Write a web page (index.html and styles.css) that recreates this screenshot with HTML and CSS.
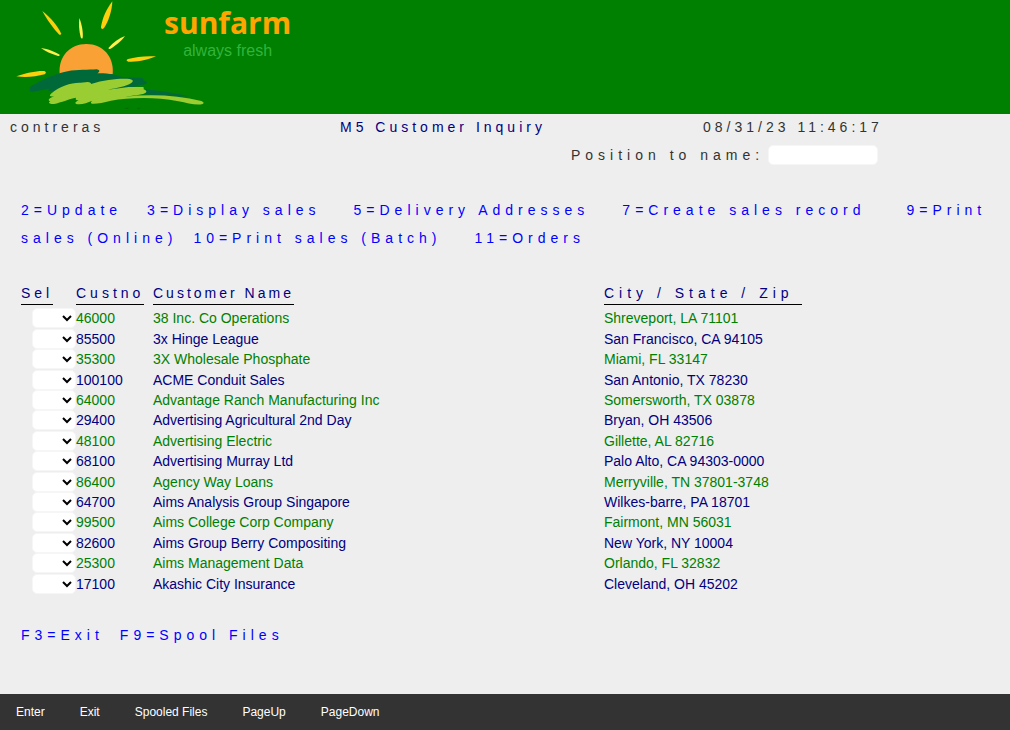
FILE: index.html
```
<!DOCTYPE html>
<html lang="en">
<head>
<meta charset="utf-8">
<title>M5 Customer Inquiry</title>
<link rel="stylesheet" href="styles.css">
</head>
<body>
<header class="banner">
  <svg class="logo" viewBox="0 0 492 342" aria-hidden="true">
    <path fill="#f9a134" d="M179 223C174 170 209 132 259 132S343 170 338 223Z"/>
    <g fill="#ffcf0d">
      <path d="M127 33C151 52 175 80 183 100Q184 106 178 104C160 86 141 59 127 33Z"/>
      <path d="M337 4C336 32 326 64 312 84Q304 91 303 81C307 55 319 28 337 4Z"/>
      <path d="M468 169C447 179 412 187 385 185Q375 181 384 177C407 170 439 167 468 169Z"/>
      <path d="M49 229C77 219 109 212 133 213Q142 217 134 223C108 230 76 233 49 229Z"/>
    </g>
    <g fill="#fff04f">
      <path d="M238 54C246 74 250 99 248 114Q245 118 242 112C237 92 236 72 238 54Z"/>
      <path d="M123 144C144 147 167 156 179 164Q180 169 174 168C154 162 135 154 123 144Z"/>
      <path d="M375 108C363 124 345 139 330 147Q324 148 326 143C339 128 357 115 375 108Z"/>
    </g>
    <path fill="#00693a" d="M107 251C133 236 166 222 203 214C232 208 266 210 290 208Q301 210 297 216L292 220C323 219 350 224 368 232L419 233Q437 235 429 241Q446 245 438 252L420 256L396 262L435 268C477 272 526 279 568 289L535 290L430 283L150 274Q137 269 156 265L94 276Q86 271 91 266Q84 260 107 251Z"/>
    <path fill="#9acd32" d="M153 281C181 257 214 247 242 248L263 246Q274 248 273 252C315 239 358 235 389 237Q405 240 394 249C378 259 350 264 323 269L386 261L427 261Q435 263 430 267Q444 273 437 278C424 286 397 286 376 290C455 282 535 286 604 303Q617 309 606 313C584 316 562 309 535 304C463 289 385 293 333 302C309 308 290 312 276 311Q269 308 277 302C261 309 244 315 229 312Q220 309 236 301Q224 301 228 293C198 299 174 312 155 312Q141 309 151 304Q141 301 151 294L162 289Q143 291 153 281Z"/>
    <path stroke="#05640b" stroke-width="2" d="M376 325H385M412 325H420"/>
  </svg>
  <div class="brand">
    <div class="brand-name">sunfarm</div>
    <div class="brand-tag">always fresh</div>
  </div>
</header>
<main class="screen">
  <div class="topline spaced">
    <span>contreras</span>
    <h1 class="title">M5 Customer Inquiry</h1>
    <span>08/31/23 11:46:17</span>
  </div>
  <div class="position spaced wide">
    <label for="name">Position to name:</label>
    <input class="name-box" id="name" type="text">
  </div>
  <p class="keys spaced wide"><span class="g3">2=Update</span><wbr><span class="g4">3=Display sales</span><wbr><span class="g4">5=Delivery Addresses</span><wbr><span class="g5">7=Create sales record</span><wbr><span>9=Print</span> <span class="g2">sales (Online)</span><wbr><span class="g4">10=Print sales (Batch)</span><wbr><span>11=Orders</span></p>
  <table class="list">
    <colgroup><col class="c-sel"><col class="c-no"><col class="c-name"><col></colgroup>
    <thead class="spaced">
      <tr><th><span class="head">Sel</span></th><th><span class="head">Custno</span></th><th><span class="head tight">Customer Name</span></th><th><span class="head head-city wide">City / State / Zip</span></th></tr>
    </thead>
    <tbody>
      <tr><td><select class="sel" aria-label="Option for 46000"><option></option></select></td><td>46000</td><td>38 Inc. Co Operations</td><td>Shreveport, LA 71101</td></tr>
      <tr><td><select class="sel" aria-label="Option for 85500"><option></option></select></td><td>85500</td><td>3x Hinge League</td><td>San Francisco, CA 94105</td></tr>
      <tr><td><select class="sel" aria-label="Option for 35300"><option></option></select></td><td>35300</td><td>3X Wholesale Phosphate</td><td>Miami, FL 33147</td></tr>
      <tr><td><select class="sel" aria-label="Option for 100100"><option></option></select></td><td>100100</td><td>ACME Conduit Sales</td><td>San Antonio, TX 78230</td></tr>
      <tr><td><select class="sel" aria-label="Option for 64000"><option></option></select></td><td>64000</td><td>Advantage Ranch Manufacturing Inc</td><td>Somersworth, TX 03878</td></tr>
      <tr><td><select class="sel" aria-label="Option for 29400"><option></option></select></td><td>29400</td><td>Advertising Agricultural 2nd Day</td><td>Bryan, OH 43506</td></tr>
      <tr><td><select class="sel" aria-label="Option for 48100"><option></option></select></td><td>48100</td><td>Advertising Electric</td><td>Gillette, AL 82716</td></tr>
      <tr><td><select class="sel" aria-label="Option for 68100"><option></option></select></td><td>68100</td><td>Advertising Murray Ltd</td><td>Palo Alto, CA 94303-0000</td></tr>
      <tr><td><select class="sel" aria-label="Option for 86400"><option></option></select></td><td>86400</td><td>Agency Way Loans</td><td>Merryville, TN 37801-3748</td></tr>
      <tr><td><select class="sel" aria-label="Option for 64700"><option></option></select></td><td>64700</td><td>Aims Analysis Group Singapore</td><td>Wilkes-barre, PA 18701</td></tr>
      <tr><td><select class="sel" aria-label="Option for 99500"><option></option></select></td><td>99500</td><td>Aims College Corp Company</td><td>Fairmont, MN 56031</td></tr>
      <tr><td><select class="sel" aria-label="Option for 82600"><option></option></select></td><td>82600</td><td>Aims Group Berry Compositing</td><td>New York, NY 10004</td></tr>
      <tr><td><select class="sel" aria-label="Option for 25300"><option></option></select></td><td>25300</td><td>Aims Management Data</td><td>Orlando, FL 32832</td></tr>
      <tr><td><select class="sel" aria-label="Option for 17100"><option></option></select></td><td>17100</td><td>Akashic City Insurance</td><td>Cleveland, OH 45202</td></tr>
    </tbody>
  </table>
  <p class="keys keys-last spaced"><span class="g2">F3=Exit</span><span>F9=Spool Files</span></p>
</main>
<footer class="actions">
  <button type="button">Enter</button>
  <button type="button">Exit</button>
  <button type="button">Spooled Files</button>
  <button type="button">PageUp</button>
  <button type="button">PageDown</button>
</footer>
</body>
</html>
```
FILE: styles.css
```
* { box-sizing: border-box; }
body {
  margin: 0;
  min-height: 100vh;
  display: flex;
  flex-direction: column;
  background: #eee;
  color: #333;
  font: 14px/28px "Liberation Sans", Arial, sans-serif;
}
.banner { display: flex; background: green; }
.logo { width: 164px; height: 114px; overflow: visible; }
.brand { display: flex; flex-direction: column; align-items: center; padding-top: 4px; }
.brand-name { color: orange; font: bold 30px/38px "Open Sans", "Noto Sans", sans-serif; }
.brand-tag { color: #32b43c; font-size: 16px; line-height: 18px; }
.screen { flex: 1; }
.spaced { letter-spacing: 4px; }
.wide, .keys { letter-spacing: 5px; }
.tight { letter-spacing: 3px; }
.topline { display: grid; grid-template-columns: 330fr 363fr 307fr; padding-left: 10px; line-height: 27px; }
.title { margin: 0; color: navy; font-size: 14px; font-weight: normal; }
.position { display: flex; align-items: center; gap: 4px; padding-left: 571px; }
.name-box { width: 110px; height: 20px; padding: 0 4px; border: 1px solid #f6f6f6; border-radius: 5px; background: #fff; font: inherit; }
.keys { margin: 27px 16px 30px 21px; color: blue; }
.g2 { margin-right: 16px; }
.g3 { margin-right: 25px; }
.g4 { margin-right: 33px; }
.g5 { margin-right: 41px; }
.list { width: 100%; table-layout: fixed; border-collapse: collapse; line-height: 20px; }
.c-sel { width: 76px; }
.c-no { width: 77px; }
.c-name { width: 451px; }
.list th, .list td { padding: 0; text-align: left; font-weight: normal; white-space: nowrap; }
.list th { color: navy; padding-bottom: 3px; }
.list th:first-child { padding-left: 21px; }
.list td:first-child { padding-left: 32px; }
.head { display: inline-block; line-height: 22px; border-bottom: 1px solid #000; }
.head-city { min-width: 198px; }
.list tbody tr { height: 20px; color: navy; }
.list tbody tr:nth-child(5n+2), .list tbody tr:nth-child(5n+4) { height: 21px; }
.list tbody tr:nth-child(odd) { color: green; }
.sel { display: block; width: 44px; height: 20px; border: 1px solid #f6f6f6; border-radius: 5px; background: #fff; color: #000; font: inherit; }
.keys-last { margin-top: 27px; }
.actions { display: flex; gap: 35px; padding: 0 16px; background: #333; }
.actions button { padding: 0; border: 0; background: none; color: #fff; font: 12px/36px "Liberation Sans", Arial, sans-serif; }
```
